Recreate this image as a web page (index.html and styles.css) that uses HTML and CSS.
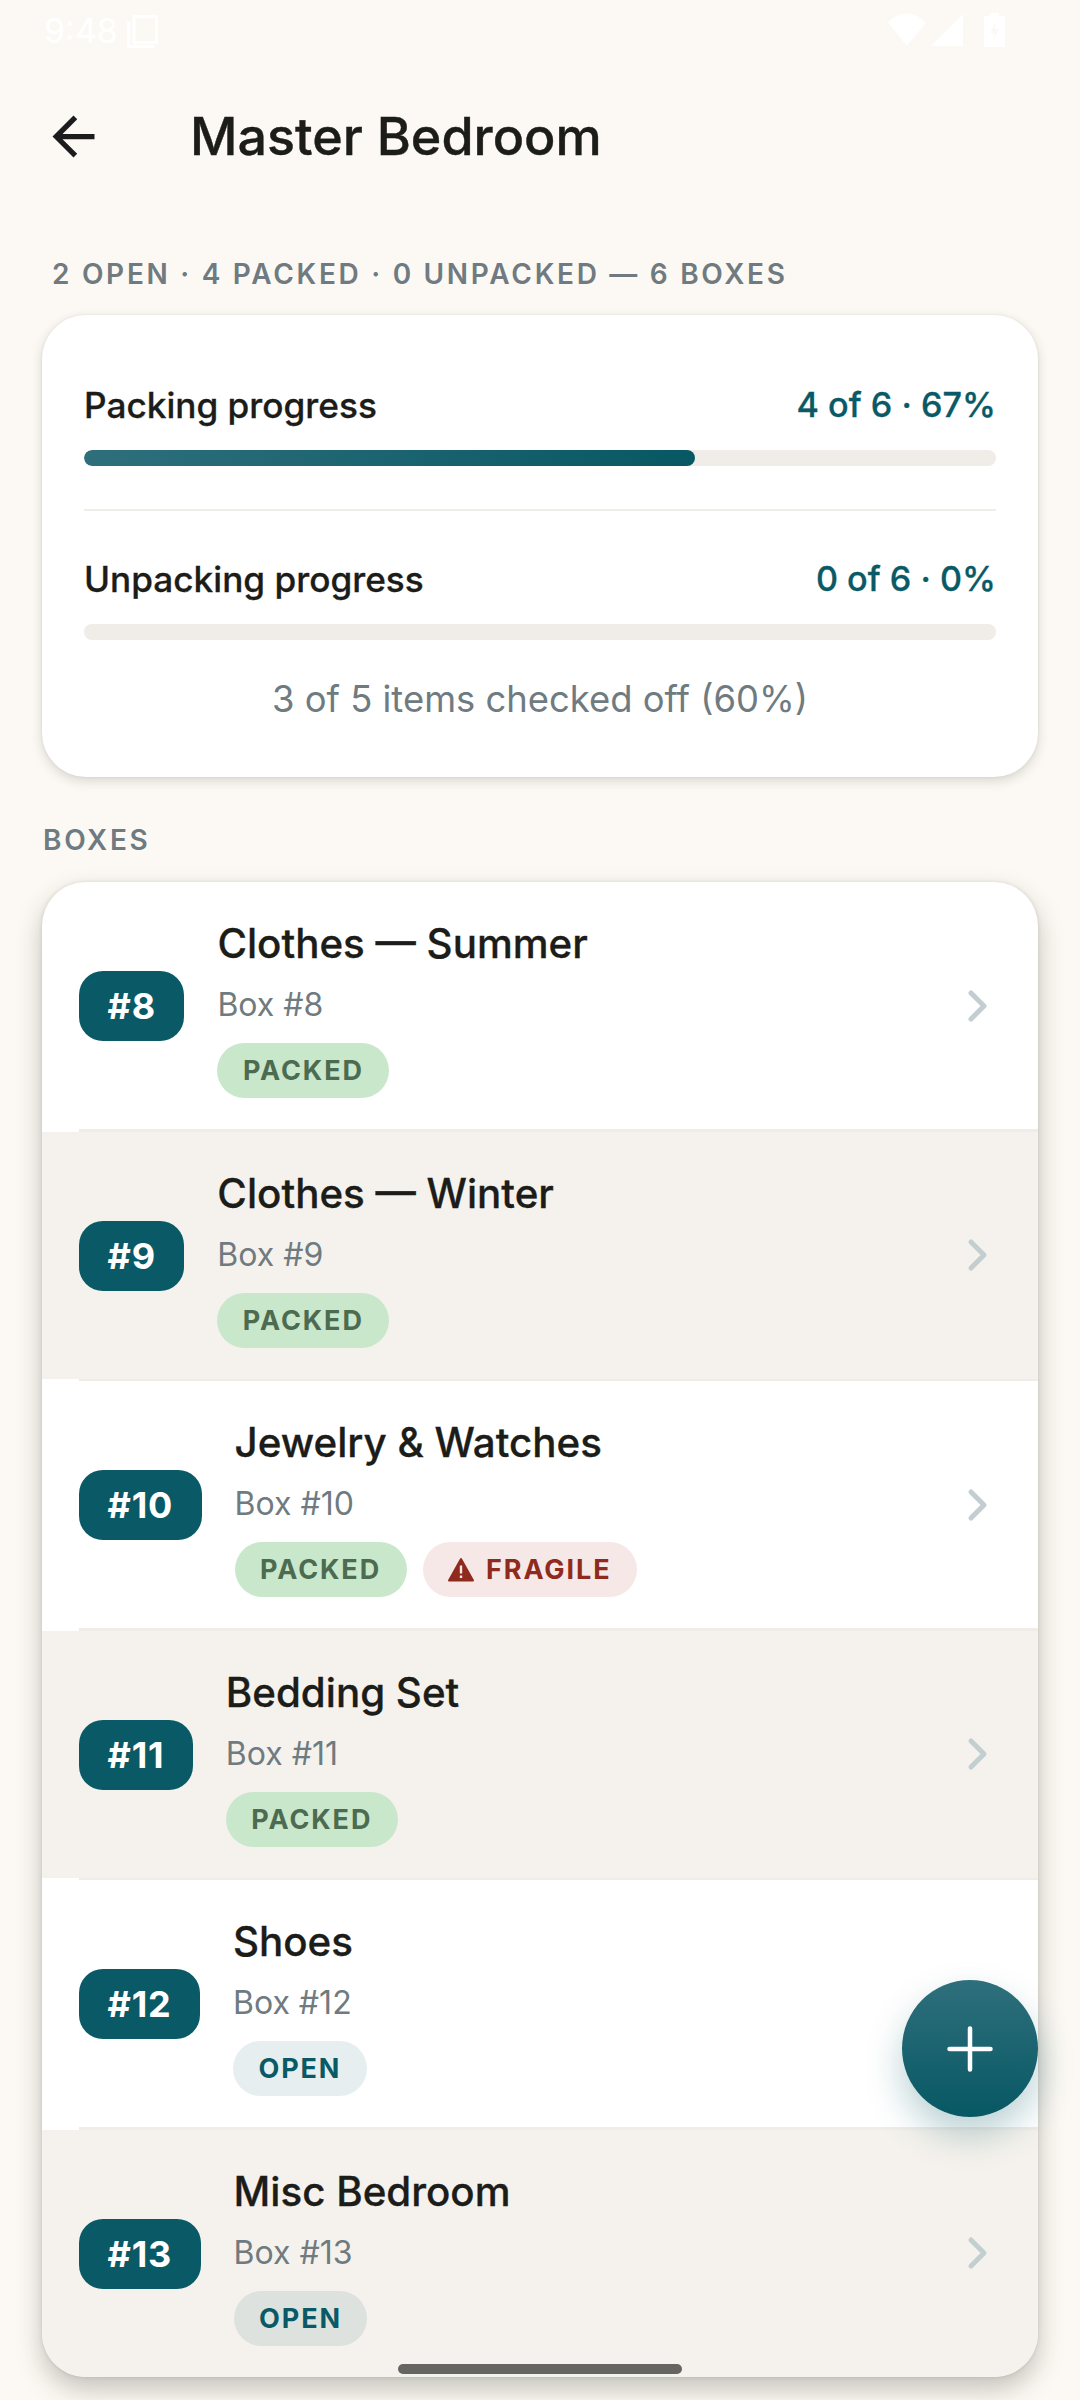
FILE: index.html
```html
<!DOCTYPE html>
<html>
<head>
    <title>Master Bedroom</title>
    <link rel="stylesheet" href="styles.css">
</head>
<body>
    <div class="status-bar">
        <div class="status-left">
            <span class="clock">9:48</span>
            <svg width="34" height="36" viewBox="0 0 34 36"><path d="M8 3.500h22.500v26H8z M2.500 9v24.500h26" fill="none" stroke="#fff" stroke-width="3"/></svg>
        </div>
        <div class="status-right">
            <svg width="40" height="34" viewBox="0 0 40 34"><path d="M1 9.500C6 4 12 1 20 1s14 3 19 8.500L20 33z" fill="#fff"/></svg>
            <svg width="34" height="34" viewBox="0 0 34 34"><path d="M33 1v32H1z" fill="#fff"/></svg>
            <svg class="battery" width="21" height="34" viewBox="0 0 21 34"><path d="M6 0h9v3h5a1 1 0 0 1 1 1v29a1 1 0 0 1-1 1H1a1 1 0 0 1-1-1V4a1 1 0 0 1 1-1h5z" fill="#fff"/><path d="M12 9l-6 11h4l-1 8 6-12h-4z" fill="#fcf9f4"/></svg>
        </div>
    </div>

    <div class="top-bar">
        <svg class="back" width="63" height="63" viewBox="0 0 24 24"><path d="M20 11H7.830l5.590-5.590L12 4l-8 8 8 8 1.410-1.410L7.830 13H20z" fill="#1c1c1e"/></svg>
        <h1>Master Bedroom</h1>
    </div>

    <div class="summary">2 OPEN · 4 PACKED · 0 UNPACKED — 6 BOXES</div>

    <div class="card progress-card">
        <div class="progress-head">
            <span class="progress-name">Packing progress</span>
            <span class="progress-value">4 of 6 · 67%</span>
        </div>
        <div class="bar"><div class="bar-fill" style="width: 67%"></div></div>
        <div class="card-line"></div>
        <div class="progress-head">
            <span class="progress-name">Unpacking progress</span>
            <span class="progress-value">0 of 6 · 0%</span>
        </div>
        <div class="bar"></div>
        <div class="items-note">3 of 5 items checked off (60%)</div>
    </div>

    <div class="section-label">BOXES</div>

    <div class="card box-list">
        <div class="box-row">
            <div class="box-num">#8</div>
            <div class="box-info">
                <div class="box-name">Clothes — Summer</div>
                <div class="box-sub">Box #8</div>
                <div class="pills"><span class="pill packed">PACKED</span></div>
            </div>
            <svg class="chevron" width="22" height="36" viewBox="0 0 22 36"><path d="M4 5l13 13L4 31"/></svg>
        </div>
        <div class="row-line"></div>
        <div class="box-row alt">
            <div class="box-num">#9</div>
            <div class="box-info">
                <div class="box-name">Clothes — Winter</div>
                <div class="box-sub">Box #9</div>
                <div class="pills"><span class="pill packed">PACKED</span></div>
            </div>
            <svg class="chevron" width="22" height="36" viewBox="0 0 22 36"><path d="M4 5l13 13L4 31"/></svg>
        </div>
        <div class="row-line"></div>
        <div class="box-row">
            <div class="box-num">#10</div>
            <div class="box-info">
                <div class="box-name">Jewelry &amp; Watches</div>
                <div class="box-sub">Box #10</div>
                <div class="pills">
                    <span class="pill packed">PACKED</span>
                    <span class="pill fragile">
                        <svg width="26" height="25" viewBox="0 0 26 25"><path d="M13 2L25 23.500H1z" fill="#8f2a1e" stroke="#8f2a1e" stroke-width="2" stroke-linejoin="round"/><path d="M13 8.500v8M13 18.500v2.500" stroke="#f6e8e7" stroke-width="2.400"/></svg>
                        FRAGILE
                    </span>
                </div>
            </div>
            <svg class="chevron" width="22" height="36" viewBox="0 0 22 36"><path d="M4 5l13 13L4 31"/></svg>
        </div>
        <div class="row-line"></div>
        <div class="box-row alt">
            <div class="box-num">#11</div>
            <div class="box-info">
                <div class="box-name">Bedding Set</div>
                <div class="box-sub">Box #11</div>
                <div class="pills"><span class="pill packed">PACKED</span></div>
            </div>
            <svg class="chevron" width="22" height="36" viewBox="0 0 22 36"><path d="M4 5l13 13L4 31"/></svg>
        </div>
        <div class="row-line"></div>
        <div class="box-row">
            <div class="box-num">#12</div>
            <div class="box-info">
                <div class="box-name">Shoes</div>
                <div class="box-sub">Box #12</div>
                <div class="pills"><span class="pill open">OPEN</span></div>
            </div>
            <svg class="chevron" width="22" height="36" viewBox="0 0 22 36"><path d="M4 5l13 13L4 31"/></svg>
        </div>
        <div class="row-line"></div>
        <div class="box-row alt">
            <div class="box-num">#13</div>
            <div class="box-info">
                <div class="box-name">Misc Bedroom</div>
                <div class="box-sub">Box #13</div>
                <div class="pills"><span class="pill open">OPEN</span></div>
            </div>
            <svg class="chevron" width="22" height="36" viewBox="0 0 22 36"><path d="M4 5l13 13L4 31"/></svg>
        </div>
    </div>

    <div class="fab">
        <svg width="50" height="50" viewBox="0 0 50 50"><path d="M25 4.500v41M4.500 25h41" stroke="#fff" stroke-width="4.500" stroke-linecap="round"/></svg>
    </div>
    <div class="nav-pill"></div>
</body>
</html>
```

FILE: styles.css
```css
body {
    font-family: 'Inter', 'Noto Sans', sans-serif;
    background-color: #fcf9f4;
    color: #1c1c19;
    margin: 0;
    padding: 0;
    width: 1080px;
    height: 2400px;
    overflow: hidden;
    position: relative;
}

/* status bar, white on cream like the real phone */
.status-bar {
    height: 62px;
    display: flex;
    justify-content: space-between;
    align-items: flex-start;
    padding: 13px 75px 0 44px;
    box-sizing: border-box;
}

.status-left {
    display: flex;
    align-items: center;
    gap: 8px;
}

.clock {
    font-size: 34px;
    line-height: 36px;
    color: white;
}

.status-right {
    display: flex;
    align-items: center;
    gap: 3px;
}

.battery {
    margin-left: 17px;
}

.top-bar {
    height: 148px;
    display: flex;
    align-items: center;
    padding-left: 42px;
}

.back {
    flex: none;
}

.top-bar h1 {
    margin: 0 0 0 85px;
    font-size: 52px;
    font-weight: 500;
    -webkit-text-stroke: 0.4px #1c1c19;
}

.summary {
    margin: 46px 0 0 52px;
    font-size: 28px;
    line-height: 36px;
    font-weight: 600;
    letter-spacing: 2.700px;
    color: #6f7b80;
}

.card {
    margin: 0 42px;
    background-color: white;
    border-radius: 44px;
}

.progress-card {
    margin-top: 23px;
    height: 462px;
    box-sizing: border-box;
    padding: 68px 42px 0;
    box-shadow: 0 4px 12px rgba(40, 35, 25, 0.16), 0 0 3px rgba(40, 35, 25, 0.08);
}

.progress-head {
    display: flex;
    justify-content: space-between;
    line-height: 44px;
    font-weight: 500;
    -webkit-text-stroke: 0.3px;
}

.progress-name {
    font-size: 35.200px;
}

.progress-value {
    font-size: 34.200px;
    color: #095a66;
}

.bar {
    margin-top: 23px;
    height: 16px;
    border-radius: 8px;
    background-color: #f0ece7;
    overflow: hidden;
}

.bar-fill {
    height: 100%;
    border-radius: 8px;
    background: linear-gradient(90deg, #2f6f7c, #075864);
}

.card-line {
    height: 2px;
    margin: 43px 0 46px;
    background-color: #f0ece7;
}

.items-note {
    margin-top: 34px;
    line-height: 50px;
    font-size: 36.400px;
    color: #6f7b80;
    text-align: center;
}

.section-label {
    margin: 45px 0 24px 43px;
    font-size: 28px;
    line-height: 36px;
    font-weight: 600;
    letter-spacing: 2.700px;
    color: #6f7b80;
}

.box-list {
    height: 1495px;
    overflow: hidden;
    box-shadow: 0 12px 26px rgba(40, 35, 25, 0.26), 0 0 4px rgba(40, 35, 25, 0.12);
}

.box-row {
    height: 247px;
    display: flex;
    align-items: center;
    padding: 0 49px 0 37px;
}

.box-row.alt {
    background-color: #f5f2ed;
}

.row-line {
    height: 2.600px;
    margin-left: 37px;
    background-color: #f0ece7;
}

.box-num {
    flex: none;
    height: 70px;
    line-height: 70px;
    margin-top: 1px;
    padding: 0 28.500px;
    border-radius: 24px;
    background-color: #095a66;
    color: white;
    font-size: 36px;
    font-weight: 700;
    letter-spacing: 0.800px;
}

.box-info {
    flex: 1;
    margin: 7px 0 0 33px;
}

.box-name {
    font-size: 40.300px;
    line-height: 48px;
    font-weight: 500;
    -webkit-text-stroke: 0.3px #1c1c19;
}

.box-sub {
    margin-top: 15px;
    font-size: 32px;
    line-height: 44px;
    color: #6f7b80;
}

.pills {
    margin-top: 16px;
    display: flex;
    gap: 16px;
}

.pill {
    height: 55px;
    line-height: 55px;
    padding: 0 25.500px;
    border-radius: 28px;
    font-size: 27px;
    font-weight: 700;
    letter-spacing: 1.900px;
}

.pill.packed {
    background-color: #c9e7cb;
    color: #4c6b50;
}

.pill.open {
    background-color: rgba(9, 90, 102, 0.1);
    color: #095a66;
}

.pill.fragile {
    display: flex;
    align-items: center;
    gap: 12px;
    background-color: #f6e8e7;
    color: #8f2a1e;
}

.chevron {
    flex: none;
}

.chevron path {
    fill: none;
    stroke: #c3ced1;
    stroke-width: 5;
    stroke-linecap: round;
    stroke-linejoin: round;
}

/* floats over the list */
.fab {
    position: absolute;
    left: 902px;
    top: 1980px;
    width: 136px;
    height: 137px;
    border-radius: 50%;
    display: flex;
    align-items: center;
    justify-content: center;
    background: linear-gradient(180deg, #2f6f7c, #075864);
    box-shadow: 0 18px 36px rgba(9, 90, 102, 0.28);
}

.nav-pill {
    position: absolute;
    left: 398px;
    top: 2364px;
    width: 284px;
    height: 10px;
    border-radius: 5px;
    background-color: #666561;
}
```
